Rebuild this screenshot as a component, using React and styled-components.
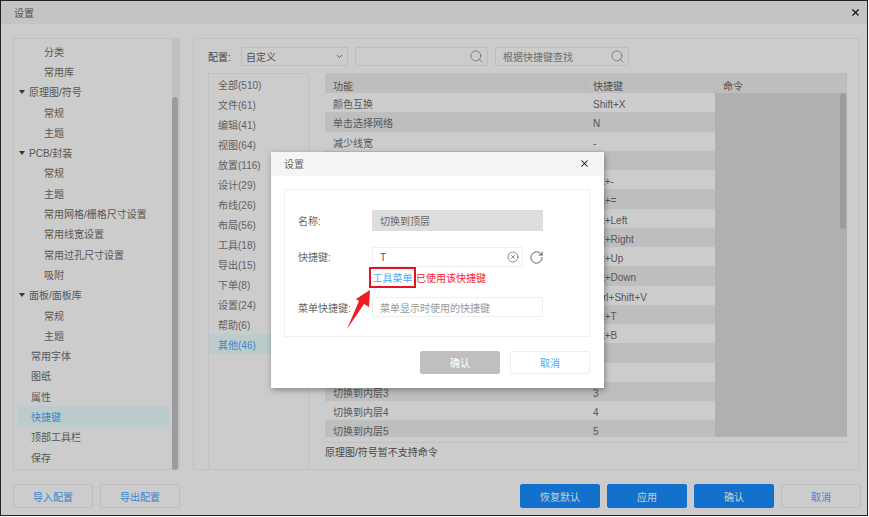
import React from "react";
import styled, { createGlobalStyle } from "styled-components";
import { Search, CircleX, RotateCw, X, ChevronDown } from "lucide-react";

const Global = createGlobalStyle`
  html, body { margin: 0; padding: 0; background: #fff; }
  * { box-sizing: border-box; }
  body { font-family: "Liberation Sans", "Noto Sans CJK SC", sans-serif; font-size: 10px; color: #6e6e6e; }
`;

const Window = styled.div`
  position: relative; width: 868px; height: 516px; border: 1px solid #222; background: #fff; overflow: hidden;
  display: flex; flex-direction: column;
`;
const TitleBar = styled.div`
  flex: none; height: ${p => p.$h}px; padding: 0 ${p => p.$r}px ${p => p.$b || 0}px ${p => p.$l}px; background: #f5f5f5;
  display: flex; align-items: center; justify-content: space-between; color: #666; font-size: 10px;
  svg { color: #111; }
`;
const Main = styled.div`display: flex; gap: 13px; padding: 14px 7px 0 12px;`;
const Sidebar = styled.div`
  width: 167px; height: 432px; border: 1px solid #f2f2f2; display: flex; justify-content: space-between;
`;
const Tree = styled.div`width: 156px; padding: 2px 0 0 4px; display: flex; flex-direction: column;`;
const TreeRow = styled.div`
  flex: none; height: 20.3px; display: flex; align-items: center;
  padding-left: ${p => p.$indent}px;
  background: ${p => (p.$active ? "#ecffff" : "transparent")};
  color: ${p => (p.$active ? "#49a9ff" : "#6e6e6e")};
`;
const Caret = styled.span`
  width: 0; height: 0; margin-right: 4px; border-left: 3.5px solid transparent; border-right: 3.5px solid transparent;
  border-top: 4px solid #444;
`;
const Track = styled.div`width: 7px; height: 100%; background: #f2f2f2; padding-top: ${p => p.$top}px; flex: none;`;
const Thumb = styled.div`width: 6px; height: ${p => p.$h}px; background: #c4c4c4; border-radius: 3px;`;
const Panel = styled.div`
  width: 667px; height: 432px; border: 1px solid #f2f2f2; padding: 8px 0 0 14px; display: flex; flex-direction: column;
`;
const Toolbar = styled.div`display: flex; align-items: center; height: 19px; margin-bottom: 7px;`;
const ToolLabel = styled.span`width: 33px; color: #5a5a5a;`;
const Field = styled.div`
  width: ${p => p.$w}px; height: 19px; margin-right: ${p => p.$mr}px; border: 1px solid #eee; padding: 0 3px 0 7px;
  display: flex; align-items: center; justify-content: space-between; color: #8a8a8a;
  svg { color: #6e6e6e; }
`;
const SelectField = styled(Field)`color: #666; padding-left: 4px;`;
const Content = styled.div`flex: 1; display: flex; gap: 16px; min-height: 0;`;
const CategoryList = styled.div`
  width: 101px; border: 1px solid #f2f2f2; border-bottom: 0; display: flex; flex-direction: column;
`;
const Category = styled.div`
  height: 20px; flex: none; padding-left: 9px; display: flex; align-items: center;
  background: ${p => (p.$active ? "#ecffff" : "transparent")};
  color: ${p => (p.$active ? "#49a9ff" : "#7a7a7a")}; font-size: 10px;
`;
const TableWrap = styled.div`width: 522px; display: flex; flex-direction: column;`;
const Head = styled.div`
  flex: none; height: 20px; display: grid; grid-template-columns: 261px 129px 132px; background: #eee; color: #666;
  span { padding: 5px 0 0 7px; border-right: 1px solid #e8e8e8; }
  span:first-child, span:last-child { padding-left: 8px; }
`;
const TableBody = styled.div`flex: none; height: 344px; display: flex; overflow: hidden;`;
const Rows = styled.div`width: 390px; flex: none;`;
const Row = styled.div`
  height: 19.25px; display: grid; grid-template-columns: 261px 129px; line-height: 14px; padding-top: 5px;
  background: ${p => (p.$even ? "#eee" : "#fff")}; color: #6e6e6e;
  span { padding-left: 7px; }
  span:first-child { padding-left: 8px; }
`;
const CommandColumn = styled.div`
  flex: 1; background: #dcdcdc; display: flex; justify-content: flex-end; padding-right: 1px;
`;
const Note = styled.div`
  margin-top: 5px; width: 522px; border-top: 1px solid #f2f2f2; padding-top: 2px; color: #5a5a5a; line-height: 16px;
`;
const Footer = styled.div`display: flex; justify-content: space-between; padding: 14px 6px 0 12px;`;
const Group = styled.div`display: flex; gap: 7px;`;
const Button = styled.button`
  width: 80px; height: 24px; padding: 0; border-radius: 2px; font: inherit; font-size: 10px;
  border: 1px solid ${p => (p.$primary ? "#168eff" : "#eee")};
  background: ${p => (p.$primary ? "#168eff" : "#fff")};
  color: ${p => (p.$primary ? "#fff" : "#49a9ff")};
`;
const Dim = styled.div`position: absolute; inset: 0; background: rgba(0, 0, 0, 0.2);`;
const Modal = styled.div`
  position: absolute; left: 270px; top: 151px; width: 333px; height: 236px; background: #fff;
  box-shadow: 1px 2px 6px rgba(0, 0, 0, 0.35); display: flex; flex-direction: column;
`;
const FormBox = styled.div`
  width: 306px; height: 148px; margin: 13px 0 0 13px; border: 1px solid #f0f0f0; padding: 20px 0 0 13px;
  display: flex; flex-direction: column; position: relative;
`;
const FormRow = styled.div`display: flex; align-items: center; margin-top: ${p => p.$mt || 0}px;`;
const FormLabel = styled.label`width: 74px; flex: none; color: #666; font-size: 10px; padding-bottom: ${p => p.$b || 0}px;`;
const ReadOnly = styled.div`
  width: 171px; height: 21px; padding-left: 8px; display: flex; align-items: center; background: #ddd; color: #666; font-size: 10px;
`;
const KeyInput = styled.div`
  width: ${p => p.$w}px; height: 20px; padding: 0 3px 0 7px; border: 1px solid #eee; border-radius: 2px;
  display: flex; align-items: center; justify-content: space-between;
  color: ${p => (p.$placeholder ? "#999" : "#555")}; font-size: 10px;
  svg { color: #444; }
`;
const Refresh = styled.span`margin-left: 6px; display: flex; color: #444;`;
const Hint = styled.div`display: flex; align-items: center; margin-left: 71px; height: 21px; color: #f5222d; font-size: 10px;`;
const Flagged = styled.span`
  width: 47px; height: 21px; border: 2px solid #e8101c; color: #49a9ff; display: flex; align-items: center; justify-content: center; white-space: nowrap; font-size: 10px;
`;
const ModalActions = styled.div`display: flex; justify-content: flex-end; gap: 10px; padding: 14px 14px 0 0;`;
const ModalButton = styled.button`
  width: 80px; height: 23px; padding: 0; border-radius: 2px; font: inherit; font-size: 10px;
  border: 1px solid ${p => (p.$disabled ? "#bfbfbf" : "#eee")};
  background: ${p => (p.$disabled ? "#bfbfbf" : "#fff")};
  color: ${p => (p.$disabled ? "#fff" : "#49a9ff")};
`;
const Arrow = styled.svg`position: absolute; left: 60px; top: 100px;`;

const tree = [
  ["分类", 26], ["常用库", 26], ["原理图/符号", 1, true], ["常规", 26], ["主题", 26], ["PCB/封装", 1, true],
  ["常规", 26], ["主题", 26], ["常用网格/栅格尺寸设置", 26], ["常用线宽设置", 26], ["常用过孔尺寸设置", 26], ["吸附", 26],
  ["面板/面板库", 1, true], ["常规", 26], ["主题", 26], ["常用字体", 13], ["图纸", 13], ["属性", 13], ["快捷键", 13],
  ["顶部工具栏", 13], ["保存", 13],
];
const categories = ["全部(510)", "文件(61)", "编辑(41)", "视图(64)", "放置(116)", "设计(29)", "布线(26)", "布局(56)", "工具(18)", "导出(15)", "下单(8)", "设置(24)", "帮助(6)", "其他(46)"];
const rows = [
  ["颜色互换", "Shift+X"], ["单击选择网络", "N"], ["减少线宽", "-"], ["增加线宽", "="], ["减少字号", "Alt+-"], ["增加字号", "Alt+="],
  ["向左对齐", "Alt+Left"], ["向右对齐", "Alt+Right"], ["向上对齐", "Alt+Up"], ["向下对齐", "Alt+Down"], ["粘贴到当前层", "Ctrl+Shift+V"],
  ["切换到顶层", "Alt+T"], ["切换到底层", "Alt+B"], ["切换到内层1", "1"], ["切换到内层2", "2"], ["切换到内层3", "3"], ["切换到内层4", "4"], ["切换到内层5", "5"],
];

export default function App() {
  return (
    <Window>
      <Global />
      <TitleBar $h={23} $l={13} $r={6}>设置<X size={11} strokeWidth={2.4} /></TitleBar>
      <Main>
        <Sidebar>
          <Tree>
            {tree.map(([t, indent, group], i) => (
              <TreeRow key={i} $indent={indent} $active={t === "快捷键"}>
                {group && <Caret />}{t}
              </TreeRow>
            ))}
          </Tree>
          <Track $top={58}><Thumb $h={373} /></Track>
        </Sidebar>
        <Panel>
          <Toolbar>
            <ToolLabel>配置:</ToolLabel>
            <SelectField $w={107} $mr={7}>自定义<ChevronDown size={9} strokeWidth={2.5} /></SelectField>
            <Field $w={133} $mr={7}><span /><Search size={15} strokeWidth={1} /></Field>
            <Field $w={134} $mr={0}>根据快捷键查找<Search size={15} strokeWidth={1} /></Field>
          </Toolbar>
          <Content>
            <CategoryList>
              {categories.map(c => <Category key={c} $active={c === "其他(46)"}>{c}</Category>)}
            </CategoryList>
            <TableWrap>
              <Head><span>功能</span><span>快捷键</span><span>命令</span></Head>
              <TableBody>
                <Rows>
                  {rows.map(([a, b], i) => (
                    <Row key={i} $even={i % 2 === 1}><span>{a}</span><span>{b}</span></Row>
                  ))}
                </Rows>
                <CommandColumn><Thumb $h={136} /></CommandColumn>
              </TableBody>
              <Note>原理图/符号暂不支持命令</Note>
            </TableWrap>
          </Content>
        </Panel>
      </Main>
      <Footer>
        <Group><Button>导入配置</Button><Button>导出配置</Button></Group>
        <Group><Button $primary>恢复默认</Button><Button $primary>应用</Button><Button $primary>确认</Button><Button>取消</Button></Group>
      </Footer>
      <Dim />
      <Modal>
        <TitleBar $h={24} $l={13} $r={14} $b={1}>设置<X size={11} strokeWidth={2.2} /></TitleBar>
        <FormBox>
          <FormRow><FormLabel>名称:</FormLabel><ReadOnly>切换到顶层</ReadOnly></FormRow>
          <FormRow $mt={16}>
            <FormLabel $b={1}>快捷键:</FormLabel>
            <KeyInput $w={151}>T<CircleX size={12} strokeWidth={1.2} /></KeyInput>
            <Refresh><RotateCw size={15} strokeWidth={1.4} /></Refresh>
          </FormRow>
          <Hint><Flagged>工具菜单</Flagged>已使用该快捷键</Hint>
          <FormRow $mt={9}>
            <FormLabel>菜单快捷键:</FormLabel>
            <KeyInput $w={171} $placeholder>菜单显示时使用的快捷键</KeyInput>
          </FormRow>
          <Arrow width="26" height="40" viewBox="0 0 26 40">
            <path d="M25 0 L24 17 L19 14 L2 39 L14 11 L11 9 Z" fill="#ee1c25" />
          </Arrow>
        </FormBox>
        <ModalActions>
          <ModalButton $disabled>确认</ModalButton>
          <ModalButton>取消</ModalButton>
        </ModalActions>
      </Modal>
    </Window>
  );
}
